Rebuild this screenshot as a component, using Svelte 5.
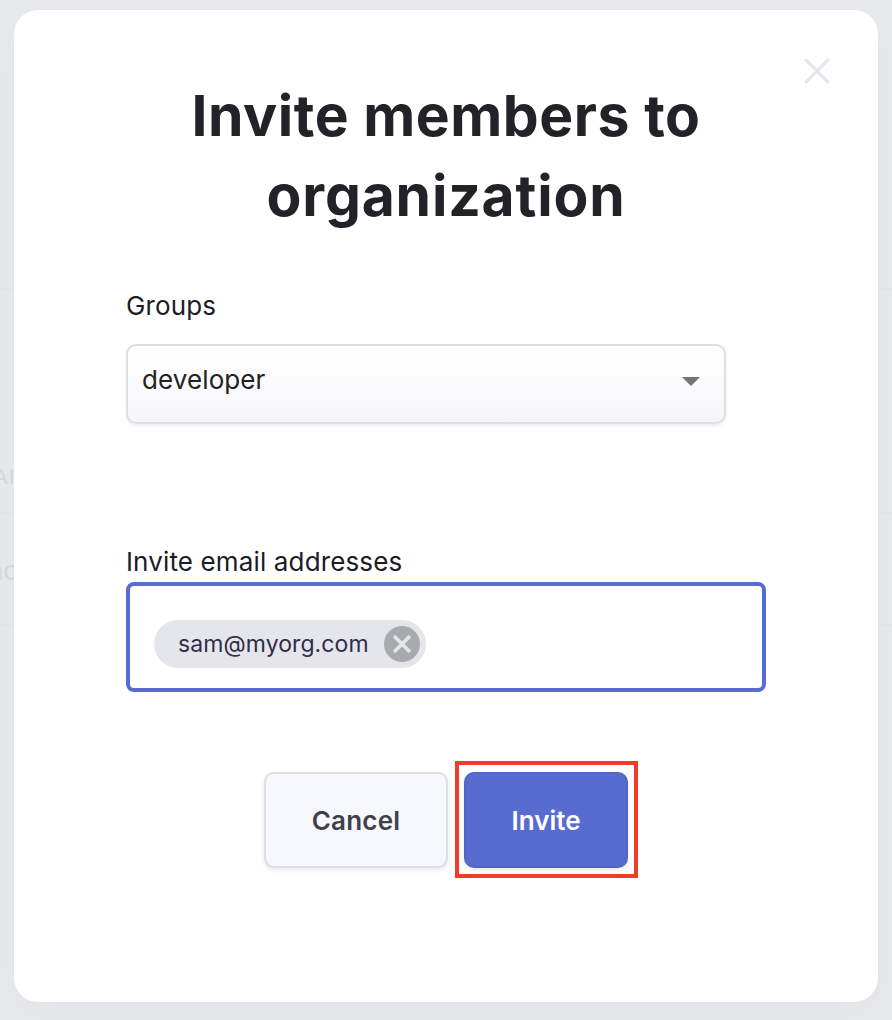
<script>
  let group = $state('developer');
  let emails = $state(['sam@myorg.com']);
  const remove = (email) => (emails = emails.filter((e) => e !== email));
</script>

<div class="page">
  <div class="backdrop" aria-hidden="true">
    <div class="line first"></div>
    <div class="line header"><span>AI</span></div>
    <div class="line row"><span>no</span></div>
  </div>

  <div class="modal" role="dialog" aria-labelledby="title">
    <button class="close" aria-label="Close">
      <svg width="26" height="26" viewBox="0 0 26 26">
        <path d="M2.2 2.2L23.8 23.8M23.8 2.2L2.2 23.8" fill="none" stroke="#e5e6eb" stroke-width="3.2" stroke-linecap="round" />
      </svg>
    </button>

    <h1 id="title"><span class="t1">Invite members to</span><br /><span class="t2">organization</span></h1>

    <div class="label groups"><span>Groups</span></div>
    <div class="select">
      <span>{group}</span>
      <svg width="18" height="9" viewBox="0 0 18 9"><path d="M0 0H18L9 9Z" fill="#757575" /></svg>
    </div>

    <div class="label emails"><span>Invite email addresses</span></div>
    <div class="input">
      {#each emails as email}
        <div class="chip">
          <span>{email}</span>
          <button aria-label="Remove" onclick={() => remove(email)}>
            <svg width="36" height="36" viewBox="0 0 36 36">
              <circle cx="18" cy="18" r="18" fill="#a9aaad" />
              <path d="M10 10L26 26M26 10L10 26" fill="none" stroke="#e5e6eb" stroke-width="3.6" />
            </svg>
          </button>
        </div>
      {/each}
    </div>

    <div class="actions">
      <button class="cancel"><span>Cancel</span></button>
      <div class="highlight"><button class="invite"><span>Invite</span></button></div>
    </div>
  </div>
</div>

<style>
  :global(body) { background: #e6e7eb; overflow: hidden; }
  * { box-sizing: border-box; }
  .page {
    position: relative;
    width: 892px;
    height: 1020px;
    padding: 10px 14px 18px;
    overflow: hidden;
    background: #e8e9ed;
    font-family: Inter, "Open Sans", sans-serif;
  }
  .backdrop { position: absolute; inset: 0; color: #d8d9dc; }
  .line { border-bottom: 2px solid #e5e6ea; white-space: nowrap; }
  .first { height: 290px; }
  .header { height: 224px; padding-top: 174px; font-size: 20px; line-height: 26px; font-weight: 500; }
  .header span { margin-left: -6px; letter-spacing: 0.8px; }
  .row { height: 112px; padding-top: 39px; font-size: 26px; line-height: 36px; }
  .row span { margin-left: -12px; }
  button { font: inherit; border: 0; padding: 0; background: none; display: block; }
  svg { display: block; }
  .modal {
    position: relative;
    display: flex;
    flex-direction: column;
    width: 864px;
    height: 992px;
    padding: 66px 112px 0;
    background: #fff;
    border-radius: 24px;
    box-shadow: 0 12px 50px rgba(30, 34, 60, 0.03);
  }
  .close { position: absolute; top: 48px; right: 48px; }
  h1 {
    margin: 0;
    font-size: 57px;
    font-weight: 700;
    line-height: 80px;
    text-align: center;
    white-space: nowrap;
    color: #232229;
  }
  .t1 { letter-spacing: 0.55px; }
  .t2 { letter-spacing: 0.8px; }
  .label { font-size: 26px; line-height: 32px; color: #1b1c26; white-space: nowrap; letter-spacing: 0.14px; }
  .groups { margin-top: 54px; }
  .select {
    display: flex;
    justify-content: space-between;
    width: 600px;
    height: 80px;
    margin-top: 22px;
    padding: 18px 24px 0 14px;
    border: 2px solid #dedee5;
    border-radius: 10px;
    background: linear-gradient(#fff, #f6f6f9);
    box-shadow: 0 2px 3px rgba(30, 34, 60, 0.08);
    font-size: 26px;
    line-height: 32px;
    letter-spacing: 0.1px;
    color: #222;
  }
  .select svg { margin-top: 13px; }
  .emails { margin-top: 122px; }
  .input {
    display: flex;
    width: 640px;
    height: 110px;
    margin-top: 4px;
    padding: 34px 24px 0;
    border: 4px solid #586bd0;
    border-radius: 8px;
  }
  .chip {
    display: flex;
    align-items: center;
    justify-content: space-between;
    width: 272px;
    height: 48px;
    padding: 0 6px 0 24px;
    border-radius: 24px;
    background: #e5e6eb;
    color: #312d4b;
    font-size: 23px;
    line-height: 32px;
    letter-spacing: 0.08px;
  }
  .actions { display: flex; margin: 69px 0 0 138px; gap: 7px; }
  .cancel, .invite {
    height: 96px;
    padding-top: 2px;
    border-radius: 10px;
    font-size: 26px;
    line-height: 32px;
    font-weight: 600;
    text-align: center;
    box-shadow: 0 2px 4px rgba(30, 34, 60, 0.1);
  }
  .cancel { width: 184px; margin-top: 11px; border: 2px solid #dddfe2; background: #f7f8fd; color: #3f404a; letter-spacing: 0.2px; }
  .highlight { width: 183px; height: 117px; padding: 7px 5px; border: 4px solid #ee3e27; }
  .invite { width: 164px; border: 2px solid #5366c6; background: #586bd0; color: #fff; }
</style>
